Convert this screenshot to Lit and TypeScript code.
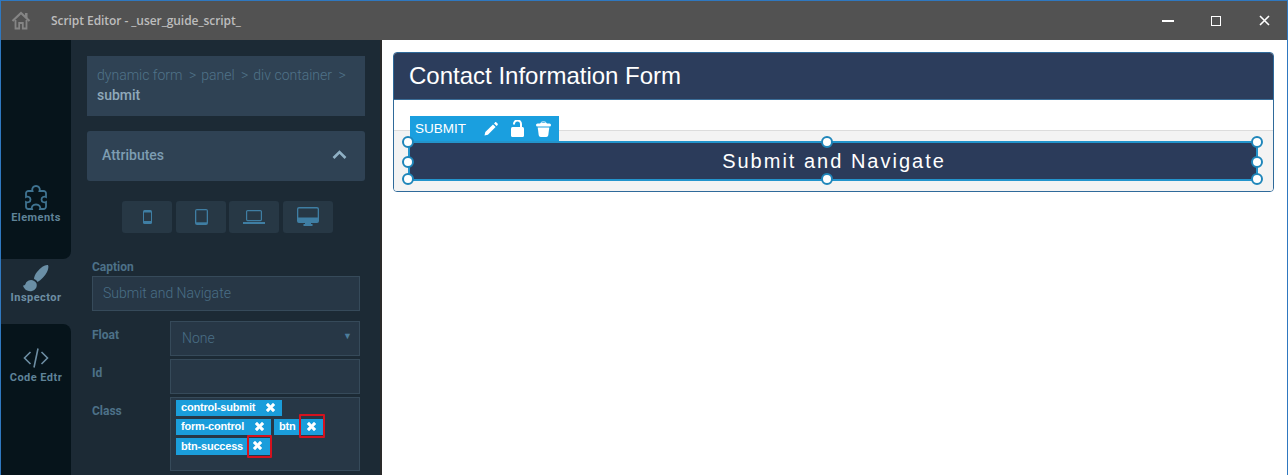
import { LitElement, html, css, svg } from "lit";
import { customElement } from "lit/decorators.js";

const X = svg`<path d="M1 3 3 1 5.500 3.500 8 1 10 3 7.500 5.500 10 8 8 10 5.500 7.500 3 10 1 8 3.500 5.500Z" fill="#fff" stroke="#fff" stroke-width=".4" stroke-linejoin="round"/>`;
const xIcon = () => html`<svg class="x" width="11" height="11" viewBox="0 0 11 11">${X}</svg>`;

@customElement("app-root")
export class AppRoot extends LitElement {
  static styles = css`
    :host { display: block; width: 1288px; height: 475px; overflow: hidden; font-family: Roboto, sans-serif; }
    .win { box-sizing: border-box; width: 1288px; height: 475px; border: 1px solid #2f78c0; border-bottom: 0; display: flex; flex-direction: column; background: #fff; }
    .title { height: 39px; flex: none; background: #525252; display: flex; align-items: center; }
    .home { margin-left: 10px; width: 20px; height: 19px; }
    .title-text { margin-left: 20px; font: 600 12px "Open Sans", sans-serif; color: #bdbdbd; letter-spacing: -.06px; }
    .spacer { flex: 1; }
    .wbtns { display: flex; margin-right: -1px; }
    .wbtn { width: 48px; height: 39px; display: flex; align-items: center; justify-content: center; }
    .main { flex: 1; display: flex; min-height: 0; }
    .side { width: 379px; flex: none; display: flex; background: #1c2a35; border-right: 2px solid #2a2a2a; }
    .rail { width: 70px; flex: none; display: flex; flex-direction: column; background: #1c2a35; }
    .tab { display: flex; flex-direction: column; align-items: center; color: #5f8398; font: 700 11px Roboto, sans-serif; letter-spacing: .45px; }
    .tab svg { display: block; }
    .t1 { height: 219px; background: #06141b; border-bottom-right-radius: 8px; justify-content: flex-end; padding-bottom: 35px; box-sizing: border-box; }
    .t1 svg { margin-bottom: 1px; }
    .t2 { height: 65px; padding-top: 5px; box-sizing: border-box; color: #6d8ea3; }
    .t2 svg { margin-bottom: -1px; }
    .t3 { flex: 1; background: #06141b; border-top-right-radius: 8px; padding-top: 24px; }
    .t3 svg { margin-bottom: 3px; }
    .panel { flex: 1; min-width: 0; padding: 16px 0 0 16px; box-sizing: border-box; }
    .crumb { width: 278px; height: 60px; box-sizing: border-box; background: #2f4254; padding: 9px 10px; font: 300 14px/20px Roboto, sans-serif; color: #4f7389; }
    .sep { margin: 0 5px 0 6.5px; }
    .crumb b { display: block; font-weight: 500; color: #8fa9ba; }
    .attr { margin-top: 15px; width: 278px; height: 50px; box-sizing: border-box; background: #2f4254; border-radius: 3px; display: flex; align-items: center; justify-content: space-between; padding: 0 18px 2px 15px; font: 500 14px Roboto, sans-serif; color: #7d9db2; }
    .devices { display: flex; gap: 4px; margin: 20px 0 0 35px; }
    .dev { width: 50px; height: 32px; border-radius: 3px; background: #273845; display: flex; align-items: center; justify-content: center; }
    .dev.laptop { margin-left: -1px; }
    .dev.mon { padding-bottom: 1px; box-sizing: border-box; }
    .form { margin: 27px 0 0 5px; width: 268px; display: flex; flex-direction: column; }
    .lbl { font: 700 12px/14px Roboto, sans-serif; color: #4d7188; }
    .inp { box-sizing: border-box; height: 35px; background: #273746; border: 1px solid #364a5a; font: 300 14px Roboto, sans-serif; color: #4a6f87; display: flex; align-items: center; padding: 0 11px 2px; }
    .cap { margin-top: 2px; padding: 0 10px 2px; }
    .row { display: grid; grid-template-columns: 78px 190px; margin-top: 10px; }
    .row.tight { margin-top: 3px; }
    .row .lbl { padding-top: 7px; }
    .sel { justify-content: space-between; padding: 0 7px 2px 11px; }
    .tri { font-size: 9px; color: #4d7d9c; margin-top: -3px; }
    .tags { box-sizing: border-box; height: 74px; background: #273746; border: 1px solid #364a5a; padding: 2px 5px; display: flex; flex-direction: column; gap: 3px; }
    .trow { display: flex; gap: 3px; }
    .tag { box-sizing: border-box; height: 16px; background: #1a9ddb; color: #fff; font: 700 11px/15px "Liberation Sans", sans-serif; letter-spacing: -.2px; display: flex; align-items: center; padding: 0 0 1px 5px; position: relative; }
    .tag.last { height: 17px; }
    .x { display: block; position: absolute; top: 2px; }
    .w1 { width: 106px; } .w1 .x { left: 89px; }
    .w2 { width: 95px; } .w2 .x { left: 78px; }
    .w3 { width: 49px; } .w3 .x { left: 32px; }
    .w4 { width: 95px; } .w4 .x { left: 76px; }
    .hl { position: absolute; box-sizing: border-box; border: 2px solid #d4121e; border-radius: 1px; }
    .hl1 { left: 25px; top: -5px; width: 26px; height: 24px; }
    .hl2 { left: 71px; top: -3px; width: 25px; height: 23px; }
    .content { flex: 1; min-width: 0; padding: 12px 0 0 11px; box-sizing: border-box; background: #fff; }
    .card { width: 881px; height: 140px; box-sizing: border-box; border: 1px solid #2f6a9a; border-radius: 4px; display: flex; flex-direction: column; overflow: hidden; }
    .card-h { height: 46px; flex: none; background: #2c3d5c; border-bottom: 1px solid #3a6c96; color: #fff; font: 24px/46px "Liberation Sans", sans-serif; padding-left: 15px; }
    .gap { height: 30px; flex: none; background: #fff; border-bottom: 1px solid #dcdcdc; }
    .body { flex: 1; background: #f3f3f3; }
    .stage { position: relative; height: 0; }
    .tb { position: absolute; left: 16px; top: -15px; width: 149px; height: 25px; background: #1a9fdf; color: #fff; font: 13.5px "Liberation Sans", sans-serif; display: flex; align-items: center; padding-left: 5px; box-sizing: border-box; }
    .tb span { width: 69px; }
    .tb svg { display: block; }
    .tb .lock { margin-left: 13px; }
    .tb .trash { margin-left: 12px; }
    .btn { position: absolute; left: 14px; top: 10px; width: 850px; height: 40px; box-sizing: border-box; background: #2b3b5a; border: 2px solid #2394cc; padding-left: 2px; color: #fff; font: 20px/36px "Liberation Sans", sans-serif; letter-spacing: 2px; text-align: center; }
    .h { position: absolute; width: 12px; height: 12px; box-sizing: border-box; border-radius: 50%; background: #fff; border: 2px solid #1f86ba; transform: translate(-50%,-50%); }
  `;

  render() {
    const stageHandles = [[14, 10.5], [14, 31], [14, 47.5], [433, 10.5], [433, 47.5], [863, 10.5], [863, 31], [863, 47.5]];
    const sep = html`<span class="sep">&gt;</span>`;
    return html`<div class="win">
      <div class="title">
        <svg class="home" viewBox="0 0 20 19"><path d="M1.500 10 10 2l8.500 8" fill="none" stroke="#858585" stroke-width="2.200"/><path d="M4.500 9v8.500h3.700V12h3.600v5.500h3.700V9" fill="none" stroke="#858585" stroke-width="1.800"/><rect x="14" y="2" width="2.500" height="5" fill="#858585"/></svg>
        <span class="title-text">Script Editor - _user_guide_script_</span>
        <span class="spacer"></span>
        <div class="wbtns">
          <div class="wbtn"><svg width="12" height="2"><rect width="12" height="2" fill="#fff"/></svg></div>
          <div class="wbtn"><svg width="10" height="10"><rect x=".5" y=".5" width="9" height="9" fill="none" stroke="#fff"/></svg></div>
          <div class="wbtn"><svg width="11" height="11"><path d="M1 1 10 10M10 1 1 10" stroke="#fff" stroke-width="1.600"/></svg></div>
        </div>
      </div>
      <div class="main">
        <div class="side">
          <div class="rail">
            <div class="tab t1">
              <svg width="22" height="25" viewBox="0 0 22 25"><path d="M7.500 6C6.500 3 8.500 1 11 1s4.500 2 3.500 5h4a2.500 2.500 0 0 1 2.500 2.500V12c-2-1-4.500 0-4.500 2.500S19 18 21 17v4.500a2.500 2.500 0 0 1-2.500 2.500H15c1-2.500-1-4.500-4-4.500s-5 2-4 4.500H3.500A2.500 2.500 0 0 1 1 21.500V17c2 1 4.500 0 4.500-2.500S3 11 1 12V8.500A2.500 2.500 0 0 1 3.500 6Z" fill="none" stroke="#3f7391" stroke-width="1.800"/></svg>
              Elements
            </div>
            <div class="tab t2">
              <svg width="28" height="28" viewBox="0 0 28 28"><path d="M26 1C23 .5 19 3 15 8c-2 2.500-3 5-3 7 1.500.5 3 1.500 3.500 3C19 16 23 12 25 8c1-2.500 2-5 1-7Z" fill="#6a8fa6"/><path d="M9 16c-3.500.5-5 2-5.500 4-.5 1-1.500 1.500-2.500 1.500 1 4 5 6.500 9 5.500 3.500-1 5.500-4 4.500-7.500C13.500 17.500 11 16 9 16Z" fill="#6a8fa6"/></svg>
              Inspector
            </div>
            <div class="tab t3">
              <svg width="26" height="20" viewBox="0 0 26 20"><path d="M7.500 4 1.500 10l6 6M18.500 4l6 6-6 6M15 .5 11 19.500" fill="none" stroke="#6d8ea3" stroke-width="1.600"/></svg>
              Code Edtr
            </div>
          </div>
          <div class="panel">
            <div class="crumb">dynamic form${sep}panel${sep}div container${sep}<b>submit</b></div>
            <div class="attr">Attributes
              <svg width="15" height="10" viewBox="0 0 15 10"><path d="M1.500 8 7.500 2l6 6" fill="none" stroke="#8fb0c4" stroke-width="2.600"/></svg>
            </div>
            <div class="devices">
              <div class="dev"><svg width="9" height="14" viewBox="0 0 9 14"><rect width="9" height="14" rx="1.500" fill="#3f7ea3"/><rect x="1" y="2.500" width="7" height="8.500" fill="#273845"/></svg></div>
              <div class="dev"><svg width="13" height="16" viewBox="0 0 13 16"><rect width="13" height="16" rx="2" fill="#3f7ea3"/><rect x="1.300" y="1.300" width="10.400" height="12" fill="#273845"/></svg></div>
              <div class="dev laptop"><svg width="22" height="14" viewBox="0 0 22 14"><rect x="3.600" y=".6" width="14.800" height="10" rx="1" fill="none" stroke="#3f7ea3" stroke-width="1.200"/><rect y="12" width="22" height="2" fill="#3f7ea3"/></svg></div>
              <div class="dev mon"><svg width="22" height="19" viewBox="0 0 22 19"><path d="M2 0h18a2 2 0 0 1 2 2v12a2 2 0 0 1-2 2h-6v1h1.500v2h-9v-2H8v-1H2a2 2 0 0 1-2-2V2a2 2 0 0 1 2-2Zm0 1.500a.8.8 0 0 0-.7.700v8.300h19.400V2.200a.8.8 0 0 0-.7-.7Z" fill="#3f7ea3" fill-rule="evenodd"/></svg></div>
            </div>
            <div class="form">
              <div class="lbl">Caption</div>
              <div class="inp cap">Submit and Navigate</div>
              <div class="row"><div class="lbl">Float</div><div class="inp sel">None<span class="tri">▼</span></div></div>
              <div class="row tight"><div class="lbl">Id</div><div class="inp"></div></div>
              <div class="row tight"><div class="lbl">Class</div>
                <div class="tags">
                  <div class="trow"><div class="tag w1">control-submit${xIcon()}</div></div>
                  <div class="trow">
                    <div class="tag w2">form-control${xIcon()}</div>
                    <div class="tag w3">btn${xIcon()}<div class="hl hl1"></div></div>
                  </div>
                  <div class="trow"><div class="tag w4 last">btn-success${xIcon()}<div class="hl hl2"></div></div></div>
                </div>
              </div>
            </div>
          </div>
        </div>
        <div class="content">
          <div class="card">
            <div class="card-h">Contact Information Form</div>
            <div class="gap"></div>
            <div class="body">
              <div class="stage">
                <div class="tb"><span>SUBMIT</span>
                  <svg width="14" height="14" viewBox="0 0 14 14"><path d="M.5 13.500l.8-3.400L9 2.400l2.600 2.600-7.700 7.700ZM10 1.400l1-1c.5-.4 1-.4 1.400 0l1.200 1.200c.4.400.4 1 0 1.400l-1 1Z" fill="#fff"/></svg>
                  <svg class="lock" width="13" height="17" viewBox="0 0 13 17"><path d="M3 4.500V4a3.500 3.500 0 0 1 7 0v4" fill="none" stroke="#fff" stroke-width="2"/><rect y="7" width="13" height="10" rx="1.500" fill="#fff"/></svg>
                  <svg class="trash" width="15" height="16" viewBox="0 0 15 16"><path d="M4.500 2.500C5 .3 10 .3 10.500 2.500Z" fill="none" stroke="#fff"/><rect y="2.500" width="15" height="3" rx="1.500" fill="#fff"/><path d="M1.700 6.500h11.600l-1 7.500c-.2 1.300-1 2-2 2H4.700c-1 0-1.800-.7-2-2Z" fill="#fff"/></svg>
                </div>
                <div class="btn">Submit and Navigate</div>
                ${stageHandles.map(([x, y]) => html`<div class="h" style="left:${x}px;top:${y}px"></div>`)}
              </div>
            </div>
          </div>
        </div>
      </div>
    </div>`;
  }
}
